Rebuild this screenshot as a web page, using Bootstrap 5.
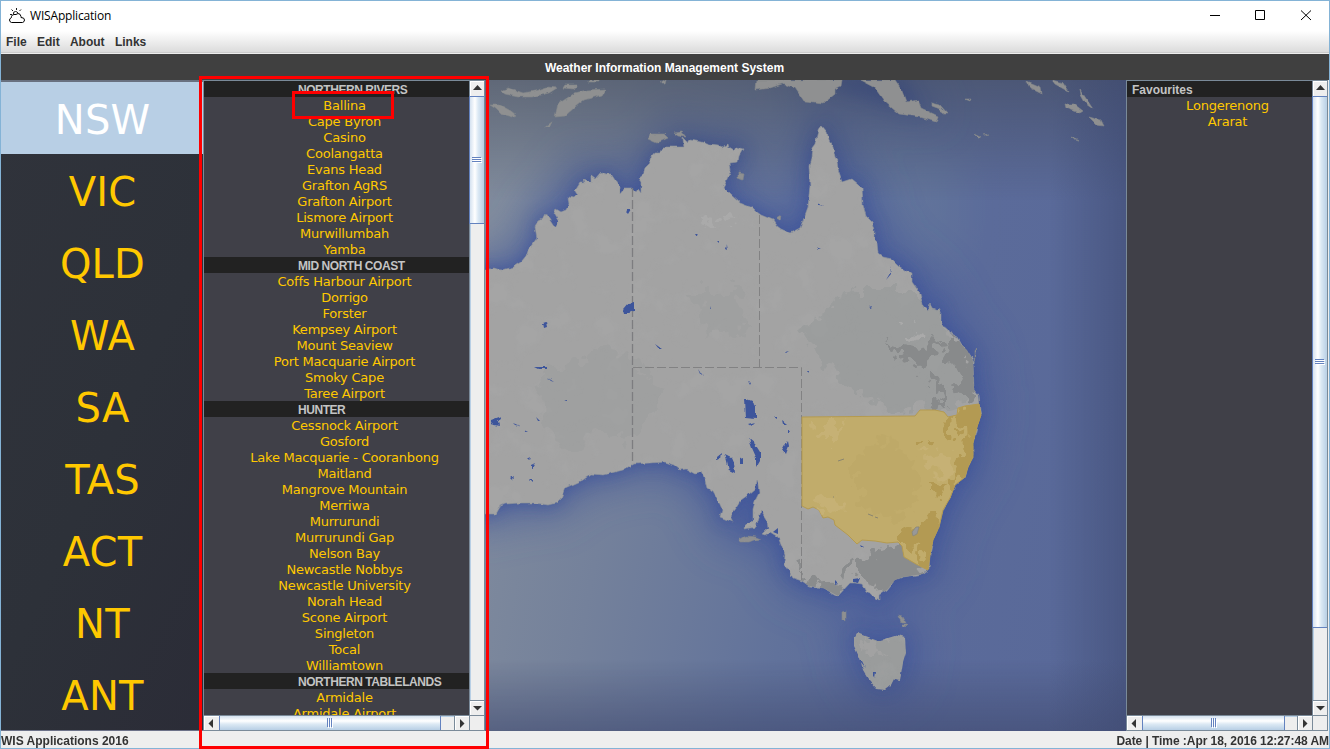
<!DOCTYPE html>
<html lang="en">
<head>
<meta charset="utf-8">
<title>WISApplication</title>
<link rel="stylesheet" href="https://cdn.jsdelivr.net/npm/bootstrap@5.3.0/dist/css/bootstrap.min.css">
<style>
html,body{height:100%;margin:0}
body{font:bold 12px/16px "Liberation Sans",Arial,sans-serif;color:#333;overflow:hidden}
.win{width:1330px;height:749px;border:1px solid #84b3d6;background:#eee}
.titlebar{height:30px;background:#fff;font:12px/30px "Open Sans",sans-serif;letter-spacing:-.18px;color:#000;padding-left:7px}
.menubar{height:23px;background:linear-gradient(#fff,#dadada);border-bottom:1px solid #eee;box-shadow:inset 0 -1px #ccc;padding-left:5px;gap:10.3px;line-height:22px}
.heading{height:26px;background:#404040;color:#fff;line-height:28px;padding-right:1px}
.main-area{height:651px}
.states{width:202px;background:linear-gradient(115deg,#30333b,#2d3139 55%,#2b2c37);border-top:2px solid #697180;border-bottom:2px solid #6c7188;height:652px}
.state{height:72px;color:#ffc800;font:40px/77px "DejaVu Sans",sans-serif;letter-spacing:.2px;border:0;padding-left:1px}
.state.on{background:#b8cfe5;color:#fff}
.pane{background:#404048;border:1px solid #7a8a99;height:651px}
.stations{width:282px}
.favs{width:202px}
.rows{min-width:0;overflow:hidden}
.group{height:16px;background:#222;color:#c4c4c4;padding-left:94px;white-space:nowrap;line-height:18px;flex:none;letter-spacing:-.45px}
.favs .group{padding-left:5px;letter-spacing:0}
.item{height:16px;color:#ffc800;font:13px/17px "DejaVu Sans",sans-serif;letter-spacing:-.22px;text-align:center;padding-left:16px;white-space:nowrap;flex:none}
.vbar{width:15px;background:#eee;border-left:1px solid #7a8a99;box-shadow:inset 1px 0 #b8cfe5;flex:none}
.hbar{height:15px;background:#eee;border-top:1px solid #7a8a99;box-shadow:inset 0 1px #b8cfe5;flex:none}
.arrow{background:#eee;flex:none;box-shadow:inset 1px 1px #fff}
.vbar .arrow{height:15px}
.hbar .arrow{width:15px}
.edge-t{border-top:1px solid #7a8a99}
.edge-l{border-left:1px solid #7a8a99}
.vthumb{background:linear-gradient(90deg,#d5e2f0,#fff 35%,#dce9f4 58%,#b8cfe5);border:1px solid #6382bf;border-width:1px 0 1px 1px;margin-left:-1px}
.hthumb{background:linear-gradient(#d5e2f0,#fff 35%,#dce9f4 58%,#b8cfe5);border:1px solid #6382bf;border-width:0 1px;flex:none}
.grip path{stroke:#6382bf;fill:none}
.grip .lit{stroke:#fff}
.corner{width:15px;height:15px;background:#eee;border:1px solid #7a8a99;border-width:1px 0 0 1px;flex:none}
.statusbar{height:17px;line-height:20px;background:#eee}
.clock{letter-spacing:-.06px}
.frame-a,.frame-b{border:3px solid red;z-index:5}
.frame-a{left:199px;top:76px;width:290px;height:673px}
.frame-b{left:292px;top:91px;width:102px;height:28px}
svg{display:block}
</style>
<script src="https://cdn.jsdelivr.net/npm/bootstrap@5.3.0/dist/js/bootstrap.bundle.min.js"></script>
</head>
<body>
<div class="win d-flex flex-column position-relative">
  <div class="titlebar d-flex">
    <svg width="18" height="18" viewBox="0 0 18 18" fill="none" stroke="#000" style="margin-top:6px"><path d="M3.500 15.500Q1.500 15 1.500 13Q1.500 11.500 3.500 10.500V9.500Q4 7.500 6 7.500H8L10 6.500Q12.500 6.500 13 9.500V10.500Q16.500 10.500 16.500 13Q16.500 15 14.500 15.500Z"/><path d="M5.500 7Q5 4.500 7.500 4.500Q9 4.500 10 6M8.500 1v2M3.500 2.500l1.500 1.500M2 7.500h2M11.500 4l1.500-1.500" stroke-width=".9"/></svg>
    <span class="ms-1">WISApplication</span>
    <svg class="ms-auto" width="120" height="28" viewBox="1209 1 120 28" fill="none" stroke="#000"><path d="M1210 15.500h10M1255.500 10.500h9v9h-9zM1301 10.500l10 9.500M1311 10.500l-10 9.500"/></svg>
  </div>
  <div class="menubar d-flex"><span>File</span><span>Edit</span><span>About</span><span>Links</span></div>
  <div class="heading text-center">Weather Information Management System</div>
  <div class="main-area d-flex">
    <div class="states text-center flex-shrink-0">
      <div class="state on">NSW</div><div class="state">VIC</div><div class="state">QLD</div><div class="state">WA</div><div class="state">SA</div><div class="state">TAS</div><div class="state">ACT</div><div class="state">NT</div><div class="state">ANT</div>
    </div>
    <div class="pane stations d-flex flex-column flex-shrink-0">
      <div class="d-flex flex-grow-1" style="min-height:0">
        <div class="rows flex-grow-1 d-flex flex-column" id="stationRows"></div>
        <div class="vbar d-flex flex-column">
          <div class="arrow"><svg width="14" height="15"><path d="M3 9h9L7.500 4z" fill="#333"/></svg></div>
          <div class="vthumb d-flex align-items-center justify-content-center" style="height:128px"><svg class="grip" width="10" height="6"><path class="lit" d="M1 1.500h9M1 3.500h9M1 5.500h9"/><path d="M0 .5h9M0 2.500h9M0 4.500h9"/></svg></div>
          <div class="arrow mt-auto edge-t"><svg width="14" height="14"><path d="M3 5h9L7.500 9.500z" fill="#333"/></svg></div>
        </div>
      </div>
      <div class="d-flex">
        <div class="hbar d-flex flex-grow-1">
          <div class="arrow"><svg width="15" height="14"><path d="M9 3v9L4.500 7.500z" fill="#333"/></svg></div>
          <div class="hthumb d-flex align-items-center justify-content-center" style="width:222px"><svg class="grip" width="6" height="10"><path class="lit" d="M1.500 1v9M3.500 1v9M5.500 1v9"/><path d="M.5 0v9M2.500 0v9M4.500 0v9"/></svg></div>
          <div class="arrow ms-auto edge-l"><svg width="14" height="14"><path d="M5 3v9L9.500 7.500z" fill="#333"/></svg></div>
        </div>
        <div class="corner"></div>
      </div>
    </div>
    <svg width="641" height="651" viewBox="485 80 641 651" class="flex-shrink-0">
      <defs>
        <linearGradient id="sea" x1="486" y1="260" x2="1126" y2="380" gradientUnits="userSpaceOnUse"><stop offset="0" stop-color="#818c9d"/><stop offset=".25" stop-color="#74819b"/><stop offset=".55" stop-color="#61729b"/><stop offset=".75" stop-color="#5b6b9a"/><stop offset="1" stop-color="#596999"/></linearGradient>
        <linearGradient id="edgeT" x2="0" y2="1"><stop stop-color="#3c4250" stop-opacity=".48"/><stop offset="1" stop-color="#3c4250" stop-opacity="0"/></linearGradient>
        <linearGradient id="edgeR"><stop stop-color="#3c4870" stop-opacity="0"/><stop offset="1" stop-color="#3c4870" stop-opacity=".55"/></linearGradient>
        <linearGradient id="edgeB" x2="0" y2="1"><stop stop-color="#404a70" stop-opacity="0"/><stop offset="1" stop-color="#404a70" stop-opacity=".6"/></linearGradient>
        <filter id="glow" filterUnits="userSpaceOnUse" x="400" y="0" width="800" height="800"><feGaussianBlur stdDeviation="20"/></filter>
        <filter id="glow2" filterUnits="userSpaceOnUse" x="440" y="40" width="740" height="740"><feGaussianBlur stdDeviation="8"/></filter>
        <filter id="rough" filterUnits="userSpaceOnUse" x="440" y="40" width="740" height="740"><feTurbulence type="fractalNoise" baseFrequency=".14" numOctaves="2" seed="4"/><feDisplacementMap in="SourceGraphic" scale="4" xChannelSelector="R" yChannelSelector="G"/></filter>
        <filter id="patchy" filterUnits="userSpaceOnUse" x="440" y="40" width="740" height="740"><feTurbulence type="fractalNoise" baseFrequency=".07" numOctaves="3" seed="9"/><feDisplacementMap in="SourceGraphic" scale="34" xChannelSelector="R" yChannelSelector="G"/></filter>
        <filter id="relief" filterUnits="userSpaceOnUse" x="486" y="80" width="640" height="651"><feTurbulence type="fractalNoise" baseFrequency=".035" numOctaves="4" seed="12"/><feColorMatrix values="0 0 0 0 .47 0 0 0 0 .48 0 0 0 0 .49 5 0 0 0 -2.500"/></filter>
        <path id="aus" d="M470 269L490 269 495 268 501 270 513 267 521 262 526 256 528 250 537 238 535 227 539 221 543 219 546 214 549 219 555 228 559 222 554 214 556 209 561 212 566 210 569 204 568 197 573 198 577 194 575 191 580 183 585 183 584 180 591 183 591 176 595 179 601 172 605 174 611 174 615 180 619 186 619 195 625 188 632 188 636 192 638 189 641 193 641 183 638 179 643 175 645 168 650 163 649 159 655 152 660 152 663 147 684 147 683 138 688 143 690 140 701 142 710 145 718 146 722 148 728 144 729 148 734 151 736 147 743 149 739 156 738 162 730 163 731 170 727 179 723 187 731 195 740 203 753 208 757 212 761 215 773 220 777 226 781 229 790 233 800 228 802 223 804 218 808 207 810 185 809 165 811 158 812 148 815 144 817 135 819 128 822 126 827 132 829 141 833 147 835 157 837 160 838 170 842 182 851 179 862 188 863 205 866 216 872 222 874 230 874 240 877 243 878 253 883 257 892 259 900 267 906 271 912 273 912 282 920 293 923 307 928 311 930 304 932 308 937 310 939 307 941 312 941 325 947 327 951 334 957 337 961 344 967 350 972 358 973 362 974 390 978 395 979 404 981 415 977 427 973 443 973 457 968 467 965 477 955 485 950 498 943 510 939 527 933 540 930 555 929 569 923 574 903 577 895 580 887 590 882 593 879 595 879 600 872 595 866 592 862 584 855 583 850 583 838 596 823 588 809 586 802 581 793 578 789 571 784 565 785 555 778 537 770 532 765 535 762 534 768 528 767 520 761 510 759 517 756 527 744 529 747 524 753 522 753 509 756 499 759 493 758 484 756 480 755 489 748 495 741 500 736 508 730 516 733 522 725 519 720 517 722 509 718 500 713 491 707 488 705 480 701 472 695 474 686 469 680 470 674 465 665 462 650 463 633 464 623 470 611 473 604 475 591 474 583 480 565 488 561 498 556 503 548 505 535 503 521 503 505 504 499 507 495 514 470 514Z"/>
        <path id="tas" d="M854 638L857 633 870 638 878 641 888 638 898 635 905 637 906 653 903 663 901 675 900 680 894 679 891 685 885 690 877 689 869 680 863 670 860 659 854 646Z"/>
        <g id="isles"><path d="M648 139L650 134 664 134 668 138 657 143Z"/><path d="M674 133l8-1 4 5-8-1zM738 172l6 1-1 7-5-2zM776 218l5-3-1 5z"/><path d="M501 91l8-3 14 5 12-2 12-4 10 1-8 5-18 4-12 0-14-3zM563 88l2-3 12 0-3 4zM555 117l3-13 17-11 12-3 19-1-4 6-18 5-9 7-10 9zM490 105l10 0 11 6 5 4-4 2-11-3-5-5zM545 127l7-5-2 4zM588 80h10v2h-10zM660 83l6-4-1 4zM756 80H842L841 86 835 89 835 94 824 103 804 101 795 88 782 84 770 88 755 90ZM860 80L895 80 903 91 907 102 918 100 921 108 938 116 936 122 920 117 899 114 884 101 875 88ZM932 103l8 2 8 9-5 0-3-5-8-3zM965 99l6 0-1 2zM1027 82l14 6 1 6-12-6zM1052 80l11 3 6 9-14-8zM1080 89l5 8 8 12-7-5-5-9zM1065 104l9 0 9 7-3 2-14-5zM1089 117l11 3 3 6-6-1zM1072 138l7 3-5-1zM974 134l8 4-4 0zM984 135l5-1z"/><path d="M739 540l7-4 10 1 5 2-7 1-5 2-9 0zM842 612l4-1 0 9-4-1zM898 615l4 1 4 7-4 0zM902 625l6 0-3 3zM974 362l0-10 2-5-1 9z"/></g>
        <clipPath id="land"><use href="#aus"/><use href="#tas"/></clipPath>
        <path id="nsw" d="M802 417L915 416 920 410 935 410 944 412 948 417 957 415 958 408 965 406 979 404 981 415 977 427 973 443 973 457 968 467 965 477 955 485 950 498 943 510 939 527 933 540 930 555 928 570 916 564 904 557 902 546 898 542 887 543 875 541 862 540 857 544 848 535 835 525 834 520 828 517 823 518 819 510 813 507 808 509 802 506Z"/>
        <clipPath id="nswc"><use href="#nsw"/></clipPath>
      </defs>
      <rect x="485" y="80" width="641" height="651" fill="url(#sea)"/>
      <path d="M890 140L960 150V260L940 275 880 220 840 170Z" fill="#6a819b" opacity=".25" filter="url(#glow)"/>
      <g fill="#3f559b" stroke="#3f559b" stroke-width="26" filter="url(#glow)" opacity=".62"><use href="#aus"/><use href="#tas"/><path d="M780 80h130l25 35-60-15z" stroke-width="10"/></g>
      <g fill="#384f9b" stroke="#384f9b" stroke-width="3" filter="url(#glow2)" opacity=".65"><use href="#aus"/><use href="#tas" opacity=".6"/><path d="M800 76h100l20 34-40-10z"/></g>
      <rect x="485" y="80" width="641" height="120" fill="url(#edgeT)"/>
      <rect x="1050" y="80" width="76" height="651" fill="url(#edgeR)"/>
      <rect x="485" y="660" width="641" height="71" fill="url(#edgeB)"/>
      <g filter="url(#rough)">
        <g fill="#8f9091" stroke="#85888a" stroke-width=".6"><use href="#isles"/></g>
        <use href="#aus" fill="#a3a3a3" stroke="#8f9499" stroke-width=".6"/><use href="#tas" fill="#9a9c9c"/>
      </g>
      <g clip-path="url(#land)">
        <rect x="485" y="80" width="641" height="651" filter="url(#relief)" opacity=".09"/>
        <g filter="url(#patchy)">
          <path d="M540 375L600 350 640 360 660 400 630 440 600 430 570 450 545 430Z" fill="#999a9a" opacity=".35"/>
          <path d="M690 290L740 290 745 330 710 335Z" fill="#989b9a" opacity=".4"/>
          <path d="M800 330L850 290 920 290 955 340 970 400 900 412 850 390Z" fill="#979a9a" opacity=".65"/>
          <path d="M885 343L905 350 920 352 930 340 945 342 930 360 920 365 900 358ZM945 340L958 340 975 360 980 400 968 405 955 385 960 370 948 362ZM936 375l8 10 0 16-12-4-3-10z" fill="#888a8b"/>
          <path d="M860 560L885 548 905 540 930 565 915 585 880 590 860 580ZM800 580L840 583 850 600 810 595ZM840 570l12-8 4 6-14 12zM793 562l10 2 0 12z" fill="#8a8c8d"/>
          <path d="M905 332l10-3 4 5-8 4zM700 225l14-4 2 8zM720 218l10-6 8 10-12 4z" fill="#aaaaaa"/>
          <path d="M862 640l20 2 4 14-18 2z" fill="#a2a2a2"/>
        </g>
      </g>
      <path d="M632.500 188V464" fill="none" stroke="#7d7d80" stroke-width="1.300" stroke-dasharray="9 3"/>
      <path d="M759.500 215V367M633 367.500H801.500V580" fill="none" stroke="#828283" stroke-dasharray="9 3"/>
      <use href="#nsw" fill="#c1ac6b" stroke="#b49a50" stroke-width="1"/>
      <g clip-path="url(#nswc)"><g filter="url(#patchy)">
        <path d="M855 455L880 440 905 445 920 480 915 510 880 520 855 495Z" fill="#bda766" opacity=".6"/>
        <path d="M958 405L990 400 985 470 970 490 950 480 962 450ZM927 514l14-4-4 36-6 24-10-2 2-24-8-16zM900 538l16-10 10 14-12 10-14-4zM915 438l16 0-8 10zM930 480l18 4-4 14-14-4zM948 424l8-4-2 16-12 4z" fill="#b39a53"/>
        <path d="M810 425l34 0-8 14-16 0zM812 500l22-8 8 16-20 4zM925 455l20-4 6 20-20 4z" fill="#c6b174"/>
      </g></g>
      <path d="M912 532l4-5 3 0-2 7-4 2z" fill="#989898" stroke="#85857b" stroke-width=".7"/>
      <path d="M868 514l5 2M875 517l3 1M838 461l6-2M833 497h1" stroke="#8a8570"/>
      <g fill="#3d549b" filter="url(#rough)">
        <path d="M623 309l5-6 6-1v9l-5 2-5 0zM626 212l1-3 4 0-3 5zM744 398l8 3 4 6v12l-11-1zM748 424l7-2-4 4zM749 439l6 5 5 8 0 8-4 7 0-10-4-9zM725 454l6 3 3 7 1 9-6-3-2-9zM716 460l4-1 1-6-5 4zM740 459l3-1v6h-3zM782 450l5-9 1 5-3 8zM782 421l5 4-4 0zM788 429l2 3h-2zM774 416h3v2zM543 323l3-1 1 5-3 1zM491 420l11-4-4 6 1 4-9-2zM513 424l7 3-5-1zM524 430l4 2-2 1zM531 465l4-2-4 7zM528 458l3-1-1 3zM529 479h3v3zM511 479l3-2-1 4zM535 367h13v2h-9zM548 378l6 4-3-1zM536 417l4 4h-2zM564 400h4v1zM694 233l3 0-1 3zM725 250l1-5 1 6zM717 241h2v2zM710 309l1-4 0 4zM654 343l7 5-3 0zM698 369l5 8-3-3zM748 381l3 2-1 2zM785 352l4-1-3 2zM807 371h2v3zM818 203l6 3-5-1zM816 247l5 2-3 0zM889 266l2 8-5 6 4-7zM869 307l3-1-1 2zM773 532l5-4 0 6zM835 581l3 3-3 1zM853 579l7-1-2 5-5-1zM860 546l4 2-3 0zM862 661l3 6-5-6zM873 672l3 0-1 6z"/>
      </g>
    </svg>
    <div class="pane favs d-flex flex-column flex-shrink-0">
      <div class="d-flex flex-grow-1" style="min-height:0">
        <div class="rows flex-grow-1"><div class="group">Favourites</div><div class="item">Longerenong</div><div class="item">Ararat</div></div>
        <div class="vbar d-flex flex-column">
          <div class="arrow"><svg width="14" height="15"><path d="M3 9h9L7.500 4z" fill="#333"/></svg></div>
          <div class="vthumb d-flex align-items-center justify-content-center" style="height:532px"><svg class="grip" width="10" height="6"><path class="lit" d="M1 1.500h9M1 3.500h9M1 5.500h9"/><path d="M0 .5h9M0 2.500h9M0 4.500h9"/></svg></div>
          <div class="arrow mt-auto edge-t"><svg width="14" height="14"><path d="M3 5h9L7.500 9.500z" fill="#333"/></svg></div>
        </div>
      </div>
      <div class="d-flex">
        <div class="hbar d-flex flex-grow-1">
          <div class="arrow"><svg width="15" height="14"><path d="M9 3v9L4.500 7.500z" fill="#333"/></svg></div>
          <div class="hthumb d-flex align-items-center justify-content-center" style="width:143px"><svg class="grip" width="6" height="10"><path class="lit" d="M1.500 1v9M3.500 1v9M5.500 1v9"/><path d="M.5 0v9M2.500 0v9M4.500 0v9"/></svg></div>
          <div class="arrow ms-auto edge-l"><svg width="14" height="14"><path d="M5 3v9L9.500 7.500z" fill="#333"/></svg></div>
        </div>
        <div class="corner"></div>
      </div>
    </div>
  </div>
  <div class="statusbar d-flex justify-content-between"><span>WIS Applications 2016</span><span class="clock">Date | Time :Apr 18, 2016 12:27:48 AM</span></div>
</div>
<div class="frame-a position-absolute"></div>
<div class="frame-b position-absolute"></div>
<script>
const groups = [
  ["NORTHERN RIVERS","Ballina","Cape Byron","Casino","Coolangatta","Evans Head","Grafton AgRS","Grafton Airport","Lismore Airport","Murwillumbah","Yamba"],
  ["MID NORTH COAST","Coffs Harbour Airport","Dorrigo","Forster","Kempsey Airport","Mount Seaview","Port Macquarie Airport","Smoky Cape","Taree Airport"],
  ["HUNTER","Cessnock Airport","Gosford","Lake Macquarie - Cooranbong","Maitland","Mangrove Mountain","Merriwa","Murrurundi","Murrurundi Gap","Nelson Bay","Newcastle Nobbys","Newcastle University","Norah Head","Scone Airport","Singleton","Tocal","Williamtown"],
  ["NORTHERN TABLELANDS","Armidale","Armidale Airport"]
];
document.getElementById("stationRows").innerHTML = groups.map(([g, ...s]) =>
  `<div class="group">${g}</div>` + s.map(n => `<div class="item">${n}</div>`).join("")).join("");
</script>
</body>
</html>
